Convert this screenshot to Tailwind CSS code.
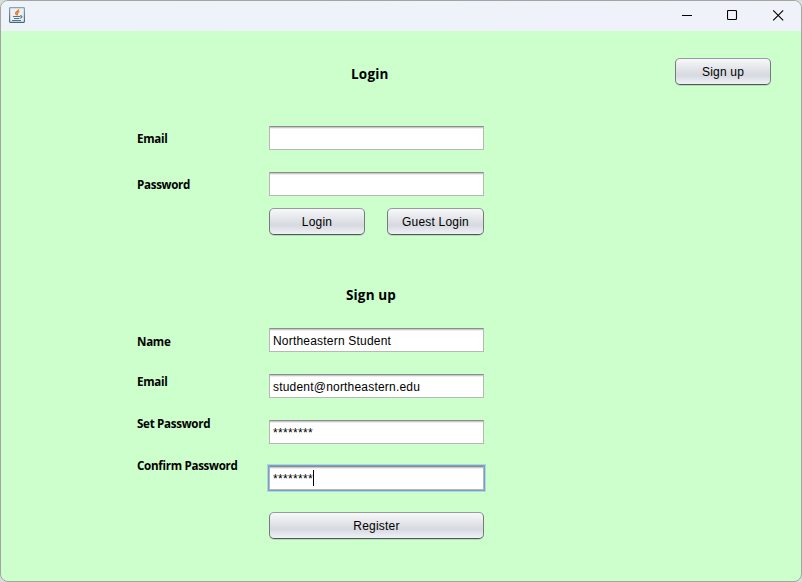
<!DOCTYPE html>
<html lang="en">
<head>
<meta charset="utf-8">
<title>Login</title>
<script src="https://cdn.jsdelivr.net/npm/@tailwindcss/browser@4"></script>
</head>
<body class="w-[802px] h-[582px] overflow-hidden bg-[#dcdcdc] font-['Liberation_Sans',sans-serif] text-[12px] tracking-[0.2px] text-black">
<div class="w-[802px] h-[582px] rounded-[8px] border border-[#a3a5a3] overflow-hidden bg-[#ccffcc] flex flex-col">
  <header class="h-[30px] shrink-0 bg-linear-to-r from-[#edf3f9] to-[#f0f2fa] flex items-start justify-between pl-2 pr-[17px]">
    <svg class="mt-[6px]" width="16" height="16" viewBox="0 0 16 16" fill="none">
      <defs><linearGradient id="b" x2="0" y2="1"><stop stop-color="#8ba2b2"/><stop offset="1" stop-color="#416680"/></linearGradient></defs>
      <rect x=".6" y=".6" width="14.8" height="14.8" rx=".8" fill="#eef1f3" stroke="url(#b)" stroke-width="1.2"/>
      <path d="M9.8 2.2C10 4 6.5 4.6 6.6 6.2c0 .8.8 1.2 1 1.9M10.4 4.6C9 5 8 5.8 8.3 6.6c.3.6.6.9-.1 1.6" stroke="#e27a25" stroke-width="1.3"/>
      <path d="M4 9.5h7M5 11.5h5.4M3 13.5h9M11 8.9c2.8-.3 2.3 2 .2 2.4" stroke="#4a7590" stroke-width="1.1"/>
    </svg>
    <div class="flex items-center gap-[35px] h-[28px]">
      <svg width="11" height="11" viewBox="0 0 11 11"><path d="M1 5.5h10" stroke="#000"/></svg>
      <svg width="11" height="11" viewBox="0 0 11 11"><rect x=".5" y=".5" width="9" height="9" rx="1" fill="none" stroke="#000" stroke-width="1.1"/></svg>
      <svg width="11" height="11" viewBox="0 0 11 11"><path d="M.2.4l10 10M10.2.4l-10 10" stroke="#000" stroke-width="1.1"/></svg>
    </div>
  </header>
  <main class="flex-1 pl-[136px] pr-[30px] flex justify-between">
    <div class="w-[347px]">
      <h1 class="pl-[214px] pt-[33px] h-[95px] leading-[20px] whitespace-nowrap font-['Open_Sans',sans-serif] font-bold text-[13.5px] tracking-[0.2px]">Login</h1>
      <section class="flex">
        <div class="w-[132px] pt-[3px] font-['Open_Sans',sans-serif] font-bold text-[11.6px] leading-[20px] tracking-[-0.3px]">
          <div class="h-[46px]">Email</div>
          <div>Password</div>
        </div>
        <div class="w-[215px] flex flex-col">
          <div class="h-[24px] border border-[#b7b7b7] border-t-[#8c8f8d] bg-white shadow-[inset_0_1px_#c8c8c8,inset_0_2px_#eeeeee]"></div>
          <div class="mt-[22px] h-[24px] border border-[#b7b7b7] border-t-[#8c8f8d] bg-white shadow-[inset_0_1px_#c8c8c8,inset_0_2px_#eeeeee]"></div>
          <div class="mt-[12px] flex justify-between">
            <button class="w-[96px] h-[27px] rounded-[5px] border border-[#777980] border-t-[#989aa0] border-b-[#53555d] bg-linear-to-b from-[#f8f8fa] via-[#d6d9df] via-65% to-[#f0f2f8] shadow-[0_1px_#b4deb8]">Login</button>
            <button class="w-[97px] h-[27px] rounded-[5px] border border-[#777980] border-t-[#989aa0] border-b-[#53555d] bg-linear-to-b from-[#f8f8fa] via-[#d6d9df] via-65% to-[#f0f2f8] shadow-[0_1px_#b4deb8]">Guest Login</button>
          </div>
        </div>
      </section>
      <h2 class="pl-[209px] pt-[50px] h-[93px] leading-[20px] whitespace-nowrap font-['Open_Sans',sans-serif] font-bold text-[13.5px] tracking-[0.15px]">Sign up</h2>
      <section class="flex">
        <div class="w-[132px] pt-[4px] font-['Open_Sans',sans-serif] font-bold text-[11.6px] leading-[20px] tracking-[-0.3px] whitespace-nowrap">
          <div class="h-[40px]">Name</div>
          <div class="h-[42px]">Email</div>
          <div class="h-[42px]">Set Password</div>
          <div>Confirm Password</div>
        </div>
        <div class="w-[215px] flex flex-col gap-[22px] leading-[24px]">
          <div class="h-[24px] px-[3px] border border-[#b7b7b7] border-t-[#8c8f8d] bg-white shadow-[inset_0_1px_#c8c8c8,inset_0_2px_#eeeeee]">Northeastern Student</div>
          <div class="h-[24px] px-[3px] border border-[#b7b7b7] border-t-[#8c8f8d] bg-white shadow-[inset_0_1px_#c8c8c8,inset_0_2px_#eeeeee]">student@northeastern.edu</div>
          <div class="h-[24px] px-[3px] border border-[#b7b7b7] border-t-[#8c8f8d] bg-white shadow-[inset_0_1px_#c8c8c8,inset_0_2px_#eeeeee] tracking-[0.33px]">********</div>
          <div class="h-[24px] px-[3px] flex border border-[#b7b7b7] border-t-[#8c8f8d] bg-white shadow-[inset_0_1px_#c8c8c8,inset_0_2px_#eeeeee,0_0_0_1px_#739fd5,0_0_0_2px_#addad3] tracking-[0.33px]"><span>********</span><span class="w-px h-[16px] mt-[3px] bg-black"></span></div>
          <button class="h-[27px] rounded-[5px] border border-[#777980] border-t-[#989aa0] border-b-[#53555d] bg-linear-to-b from-[#f8f8fa] via-[#d6d9df] via-65% to-[#f0f2f8] shadow-[0_1px_#b4deb8]">Register</button>
        </div>
      </section>
    </div>
    <button class="mt-[27px] w-[96px] h-[27px] rounded-[5px] border border-[#777980] border-t-[#989aa0] border-b-[#53555d] bg-linear-to-b from-[#f8f8fa] via-[#d6d9df] via-65% to-[#f0f2f8] shadow-[0_1px_#b4deb8]">Sign up</button>
  </main>
</div>
</body>
</html>
